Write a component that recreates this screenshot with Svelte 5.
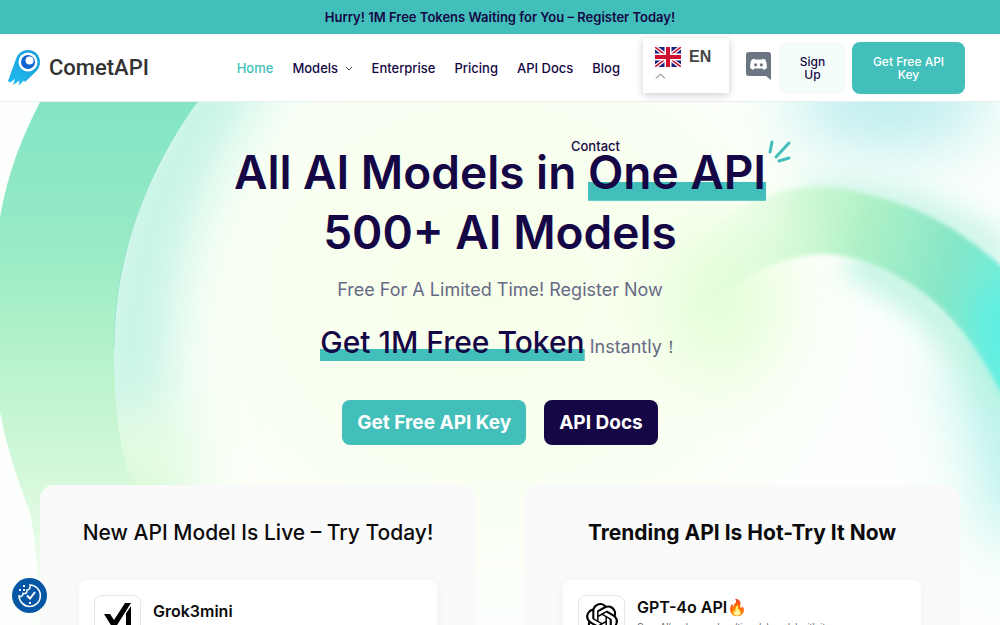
<script>
  const navItems = [
    { label: 'Home', active: true },
    { label: 'Models', dropdown: true },
    { label: 'Enterprise' },
    { label: 'Pricing' },
    { label: 'API Docs' },
    { label: 'Blog' },
  ];

  const panels = [
    {
      title: 'New API Model Is Live – Try Today!',
      model: 'Grok3mini',
      icon: 'grok',
      text: 'Grok3mini is a compact model by xAI',
    },
    {
      title: 'Trending API Is Hot-Try It Now',
      bold: true,
      model: 'GPT-4o API🔥',
      icon: 'openai',
      text: 'OpenAI’s advanced multimodal model with its\nimproved speed and vision',
    },
  ];
</script>

<div class="page">
  <a class="promo" href="#register">Hurry! 1M Free Tokens Waiting for You – Register Today!</a>

  <header>
    <a class="logo" href="#home">
      <svg width="34" height="38" viewBox="0 0 34 38">
        <defs>
          <linearGradient id="comet" x1="1" y1="0" x2="0" y2="1">
            <stop offset="0" stop-color="#169bd6" />
            <stop offset="1" stop-color="#22bdf0" />
          </linearGradient>
        </defs>
        <path fill="url(#comet)" d="M20 1c7 0 12 5.500 12 12 0 4-1.500 7-4 9.500L17 33l-1-1.500-5.500 5 1-5L5 36l2-6-5 3.500L0 32 8.500 8.500C10.500 4 15 1 20 1z" />
        <circle cx="20" cy="13" r="9.500" fill="#fff" />
        <circle cx="20" cy="13" r="7" fill="#1263d2" />
        <circle cx="21.500" cy="11.500" r="4" fill="#fff" />
      </svg>
      <span>CometAPI</span>
    </a>

    <nav>
      {#each navItems as item}
        <a href="#{item.label}" class:active={item.active}>
          {item.label}
          {#if item.dropdown}
            <svg width="8" height="6" viewBox="0 0 8 6"><path d="M1 1l3 3 3-3" fill="none" stroke="#444" /></svg>
          {/if}
        </a>
      {/each}
      <a class="contact" href="#contact">Contact</a>
    </nav>

    <button class="lang">
      <span class="current">
        <svg width="26" height="20" viewBox="0 0 26 20">
          <rect width="26" height="20" fill="#1a237b" />
          <path d="M0 0l26 20M26 0L0 20" stroke="#fff" stroke-width="4" />
          <path d="M0 0l26 20M26 0L0 20" stroke="#d0102c" stroke-width="1.500" />
          <path d="M13 0v20M0 10h26" stroke="#fff" stroke-width="7" />
          <path d="M13 0v20M0 10h26" stroke="#d0102c" stroke-width="4" />
        </svg>
        EN
      </span>
      <svg width="11" height="6" viewBox="0 0 11 6"><path d="M1 5.500l4.500-4.500L10 5.500" fill="none" stroke="#666" /></svg>
    </button>

    <a class="discord" href="#discord" aria-label="Discord">
      <svg width="25" height="28" viewBox="0 0 25 28">
        <path fill="#6c7682" d="M3 0h19a3 3 0 0 1 3 3v25l-5-4H3a3 3 0 0 1-3-3V3a3 3 0 0 1 3-3z" />
        <path fill="#fff" d="M9 7.500l-.6-.8C6.800 7 5.800 7.600 5.800 7.600 4.500 10 4 13 4.200 16c1.300 1.500 3.300 1.700 3.300 1.700l.8-1.200h8.400l.8 1.200s2-.2 3.300-1.700c.2-3-.3-6-1.600-8.400 0 0-1-.6-2.600-.9l-.6.8z" />
        <circle cx="9.600" cy="12.800" r="1.600" fill="#6c7682" />
        <circle cx="15.400" cy="12.800" r="1.600" fill="#6c7682" />
      </svg>
    </a>
    <button class="signup">Sign Up</button>
    <button class="key">Get Free API Key</button>
  </header>

  <main>
    <svg class="backdrop" viewBox="0 0 1000 523" aria-hidden="true">
      <defs>
        <linearGradient id="band" x1="0" y1="0" x2="0" y2="523" gradientUnits="userSpaceOnUse">
          <stop offset="0" stop-color="#83e5c5" />
          <stop offset="0.300" stop-color="#9aebc5" />
          <stop offset="0.500" stop-color="#b8f3cb" />
          <stop offset="0.700" stop-color="#d2f8d9" />
          <stop offset="0.900" stop-color="#effdee" />
          <stop offset="1" stop-color="#fbfffa" />
        </linearGradient>
        <linearGradient id="arc" x1="690" y1="150" x2="1000" y2="230" gradientUnits="userSpaceOnUse">
          <stop offset="0" stop-color="#e4fdd8" stop-opacity="0" />
          <stop offset="0.300" stop-color="#ccf8cf" stop-opacity="0.800" />
          <stop offset="0.500" stop-color="#b0f1c6" />
          <stop offset="0.800" stop-color="#85e6c8" />
          <stop offset="1" stop-color="#6aefe0" />
        </linearGradient>
        <radialGradient id="warm">
          <stop offset="0" stop-color="#f7ffea" />
          <stop offset="0.500" stop-color="#f9fff0" />
          <stop offset="1" stop-color="#fcfffc" />
        </radialGradient>
        <filter id="edge" filterUnits="userSpaceOnUse" x="-100" y="-100" width="1200" height="723"><feGaussianBlur stdDeviation="2" /></filter>
        <filter id="soft" filterUnits="userSpaceOnUse" x="-100" y="-100" width="1200" height="723"><feGaussianBlur stdDeviation="14" /></filter>
        <filter id="haze" filterUnits="userSpaceOnUse" x="-200" y="-200" width="1400" height="923"><feGaussianBlur stdDeviation="32" /></filter>
      </defs>
      <rect width="1000" height="523" fill="#fcfffc" />
      <ellipse cx="490" cy="190" rx="380" ry="330" fill="url(#warm)" />
      <path d="M250-60C160 60 125 160 130 330" fill="none" stroke="#b2f0df" stroke-width="60" filter="url(#haze)" />
      <ellipse cx="150" cy="370" rx="40" ry="70" fill="#dcfad9" filter="url(#haze)" />
      <path d="M105 300C115 340 130 370 140 383L200 400 190 500H90z" fill="#d6f9d6" filter="url(#soft)" />
      <ellipse cx="890" cy="0" rx="100" ry="50" fill="#bdeeee" filter="url(#haze)" />
      <path d="M940 260C970 300 985 380 990 440L1080 420V200z" fill="#b5f1ec" filter="url(#haze)" />
      <ellipse cx="720" cy="200" rx="60" ry="80" fill="#e6fed9" filter="url(#haze)" />
      <path d="M850 158C910 180 960 225 1010 310" fill="none" stroke="#c0f4e2" stroke-width="34" filter="url(#soft)" />
      <path d="M800 100C880 86 950 110 1010 160" fill="none" stroke="#ccf5e8" stroke-width="34" filter="url(#soft)" />
      <path d="M670 180C720 90 800 72 870 93 930 107 970 135 1010 172V310C980 240 940 195 890 170 840 145 780 135 690 220z" fill="url(#arc)" filter="url(#edge)" />
      <path d="M975 190C1000 190 1030 200 1030 290 1000 290 985 230 975 190z" fill="#5cefe2" filter="url(#soft)" />
      <path d="M40 0C22 35 8 70 0 115V310C8 350 18 380 30 410 36 440 39 480 39 523H150L132 383C118 340 114 300 114 245 114 150 150 65 197 0z" fill="url(#band)" />
      <path d="M197 0C150 65 114 150 114 245" fill="none" stroke="#74dcc6" stroke-opacity="0.500" />
    </svg>

    <section class="hero">
      <h1>
        All AI Models in <span class="mark">One API
          <svg class="spark" width="24" height="24" viewBox="0 0 24 24">
            <path d="M5 2L3 12M22 3L9 17M22 18l-10 3" fill="none" stroke="#42bfba" stroke-width="3" stroke-linecap="round" />
          </svg></span><br />
        500+ AI Models
      </h1>
      <p class="lead">Free For A Limited Time! Register Now</p>
      <p class="offer"><span class="mark">Get 1M Free Token</span> Instantly！</p>
      <div class="actions">
        <button>Get Free API Key</button>
        <button class="dark">API Docs</button>
      </div>
    </section>

    <section class="panels">
      {#each panels as panel}
        <div class="panel">
          <h2 class:bold={panel.bold}>{panel.title}</h2>
          <a class="model" href="#{panel.icon}">
            <span class="icon">
              {#if panel.icon === 'grok'}
                <svg width="32" height="32" viewBox="0 0 32 32">
                  <path d="M2 11h6l4 6L23 0h6L12 27z" />
                  <path d="M24 10l5-7v29h-5z" />
                  <path d="M13 27L30 0" stroke="#fff" stroke-width="1" />
                </svg>
              {:else}
                <svg width="32" height="32" viewBox="0 0 24 24">
                  <path d="M22.2819 9.8211a5.9847 5.9847 0 0 0-.5157-4.9108 6.0462 6.0462 0 0 0-6.5098-2.9A6.0651 6.0651 0 0 0 4.9807 4.1818a5.9847 5.9847 0 0 0-3.9977 2.9 6.0462 6.0462 0 0 0 .7427 7.0966 5.98 5.98 0 0 0 .511 4.9107 6.051 6.051 0 0 0 6.5146 2.9001A5.9847 5.9847 0 0 0 13.2599 24a6.0557 6.0557 0 0 0 5.7718-4.2058 5.9894 5.9894 0 0 0 3.9977-2.9001 6.0557 6.0557 0 0 0-.7475-7.0729zm-9.022 12.6081a4.4755 4.4755 0 0 1-2.8764-1.0408l.1419-.0804 4.7783-2.7582a.7948.7948 0 0 0 .3927-.6813v-6.7369l2.02 1.1686a.071.071 0 0 1 .038.052v5.5826a4.504 4.504 0 0 1-4.4945 4.4944zm-9.6607-4.1254a4.4708 4.4708 0 0 1-.5346-3.0137l.142.0852 4.783 2.7582a.7712.7712 0 0 0 .7806 0l5.8428-3.3685v2.3324a.0804.0804 0 0 1-.0332.0615L9.74 19.9502a4.4992 4.4992 0 0 1-6.1408-1.6464zM2.3408 7.8956a4.485 4.485 0 0 1 2.3655-1.9728V11.6a.7664.7664 0 0 0 .3879.6765l5.8144 3.3543-2.0201 1.1685a.0757.0757 0 0 1-.071 0l-4.8303-2.7865A4.504 4.504 0 0 1 2.3408 7.872zm16.5963 3.8558L13.1038 8.364 15.1192 7.2a.0757.0757 0 0 1 .071 0l4.8303 2.7913a4.4944 4.4944 0 0 1-.6765 8.1042v-5.6772a.79.79 0 0 0-.407-.667zm2.0107-3.0231l-.142-.0852-4.7735-2.7818a.7759.7759 0 0 0-.7854 0L9.409 9.2297V6.8974a.0662.0662 0 0 1 .0284-.0615l4.8303-2.7866a4.4992 4.4992 0 0 1 6.6802 4.66zM8.3065 12.863l-2.02-1.1638a.0804.0804 0 0 1-.038-.0567V6.0742a4.4992 4.4992 0 0 1 7.3757-3.4537l-.142.0805L8.704 5.459a.7948.7948 0 0 0-.3927.6813zm1.0976-2.3654l2.602-1.4998 2.6069 1.4998v2.9994l-2.5974 1.4997-2.6067-1.4997Z" />
                </svg>
              {/if}
            </span>
            <span class="info">
              <strong>{panel.model}</strong>
              <small>{panel.text}</small>
            </span>
          </a>
        </div>
      {/each}
    </section>
  </main>

  <button class="cookie" aria-label="Cookie settings">
    <svg width="35" height="35" viewBox="0 0 35 35">
      <circle cx="17.500" cy="17.500" r="17.500" fill="#0557a5" />
      <path d="M18 7a10.700 10.700 0 1 1-11 11c2 1 4 0 4-2.500 3 .5 4.500-1 4-3.500 2.500 0 3.500-2 3-5z" fill="none" stroke="#fff" stroke-width="1.500" />
      <path d="M15 17.500l3 3 5-6.500" fill="none" stroke="#fff" stroke-width="2" />
      <path d="M11 7h2v2h-2zM7 11h2v2H7zM11 11h2v2h-2zM17 24h2v2h-2z" fill="#fff" />
    </svg>
  </button>
</div>

<style>
  .page {
    font-family: Inter, "Liberation Sans", sans-serif;
    color: #150745;
    height: 100vh;
    overflow: hidden;
  }

  a {
    color: inherit;
    text-decoration: none;
  }

  button {
    font: inherit;
    border: none;
    cursor: pointer;
  }

  .promo {
    display: block;
    background: #42bfba;
    text-align: center;
    font-size: 13px;
    font-weight: 600;
    line-height: 34px;
  }

  header {
    position: relative;
    z-index: 2;
    display: flex;
    align-items: center;
    height: 67px;
    padding: 0 35px 0 8px;
    background: #fff;
    border-bottom: 1px solid #e8f0ee;
    font-size: 13px;
    font-weight: 500;
  }

  .logo {
    display: flex;
    align-items: center;
    gap: 7px;
    font: 500 22px Roboto, sans-serif;
    color: #333;
  }

  nav {
    position: relative;
    display: flex;
    gap: 19px;
    margin: 0 23px 0 auto;
  }

  nav svg {
    margin-left: 3px;
    vertical-align: middle;
  }

  .active {
    color: #42bfba;
  }

  .contact {
    position: absolute;
    right: 0;
    top: 78px;
  }

  .lang {
    display: flex;
    flex-direction: column;
    align-self: flex-start;
    gap: 6px;
    width: 86px;
    height: 55px;
    padding: 9px 12px;
    margin: 4px 17px 0 0;
    background: #fff;
    box-shadow: 0 2px 8px rgba(0, 0, 0, 0.2);
  }

  .current {
    display: flex;
    align-items: center;
    gap: 8px;
    font: bold 16px "Liberation Sans", sans-serif;
    color: #444;
  }

  .discord {
    display: flex;
    padding-bottom: 4px;
    margin-right: 8px;
  }

  .signup,
  .key {
    height: 52px;
    border-radius: 8px;
    font-size: 12px;
    line-height: 13px;
  }

  .signup {
    width: 67px;
    padding: 0 16px;
    margin-right: 6px;
    background: #f5fdfb;
    color: #150745;
  }

  .key {
    width: 113px;
    padding: 0 16px;
    background: #42bfba;
    color: #fff;
  }

  main {
    position: relative;
    padding: 40px 40px 60px;
    overflow: hidden;
  }

  .backdrop {
    position: absolute;
    top: 0;
    left: 0;
    width: 100%;
  }

  .hero {
    position: relative;
    text-align: center;
  }

  h1 {
    margin: 0;
    font-size: 46px;
    font-weight: 600;
    line-height: 60px;
  }

  .mark {
    position: relative;
    padding-bottom: 1px;
    background: linear-gradient(#42bfba, #42bfba) bottom / 100% 33% no-repeat;
  }

  .spark {
    position: absolute;
    top: -4px;
    right: -25px;
  }

  .lead,
  .offer {
    margin: 0;
    color: #676a85;
    font-size: 18px;
  }

  .lead {
    margin-top: 14px;
    line-height: 28px;
  }

  .offer {
    margin-top: 16px;
    line-height: 44px;
  }

  .offer .mark {
    color: #150745;
    font-size: 30px;
    font-weight: 500;
  }

  .actions {
    display: flex;
    justify-content: center;
    gap: 18px;
    margin-top: 31px;
  }

  .actions button {
    height: 45px;
    padding: 0 15px;
    border-radius: 8px;
    background: #42bfba;
    color: #fff;
    font-size: 19px;
    font-weight: 700;
  }

  .actions .dark {
    background: #150745;
  }

  .panels {
    position: relative;
    display: grid;
    grid-template-columns: 1fr 1fr;
    gap: 48px;
    margin-top: 40px;
  }

  .panel {
    padding: 32px 39px;
    border-radius: 14px;
    background: #fafafa;
    color: #0b0b0b;
  }

  h2 {
    margin: 0 0 32px;
    text-align: center;
    font-size: 21px;
    font-weight: 500;
    line-height: 31px;
    white-space: nowrap;
  }

  .bold {
    font-weight: 700;
  }

  .model {
    display: flex;
    gap: 12px;
    padding: 15px;
    border-radius: 8px;
    background: #fff;
    box-shadow: 0 0 12px rgba(0, 0, 0, 0.04);
  }

  .icon {
    display: flex;
    align-items: center;
    justify-content: center;
    width: 45px;
    height: 45px;
    border: 1px solid #e5e5e5;
    border-radius: 8px;
  }

  .info {
    display: flex;
    flex: 1;
    flex-direction: column;
    justify-content: center;
  }

  strong {
    font-size: 16px;
    font-weight: 600;
    line-height: 24px;
  }

  small {
    color: #666;
    font-size: 9px;
    line-height: 16px;
    white-space: pre-line;
  }

  .cookie {
    position: fixed;
    left: 12px;
    bottom: 12px;
    z-index: 3;
    display: flex;
    padding: 0;
    background: none;
  }
</style>
